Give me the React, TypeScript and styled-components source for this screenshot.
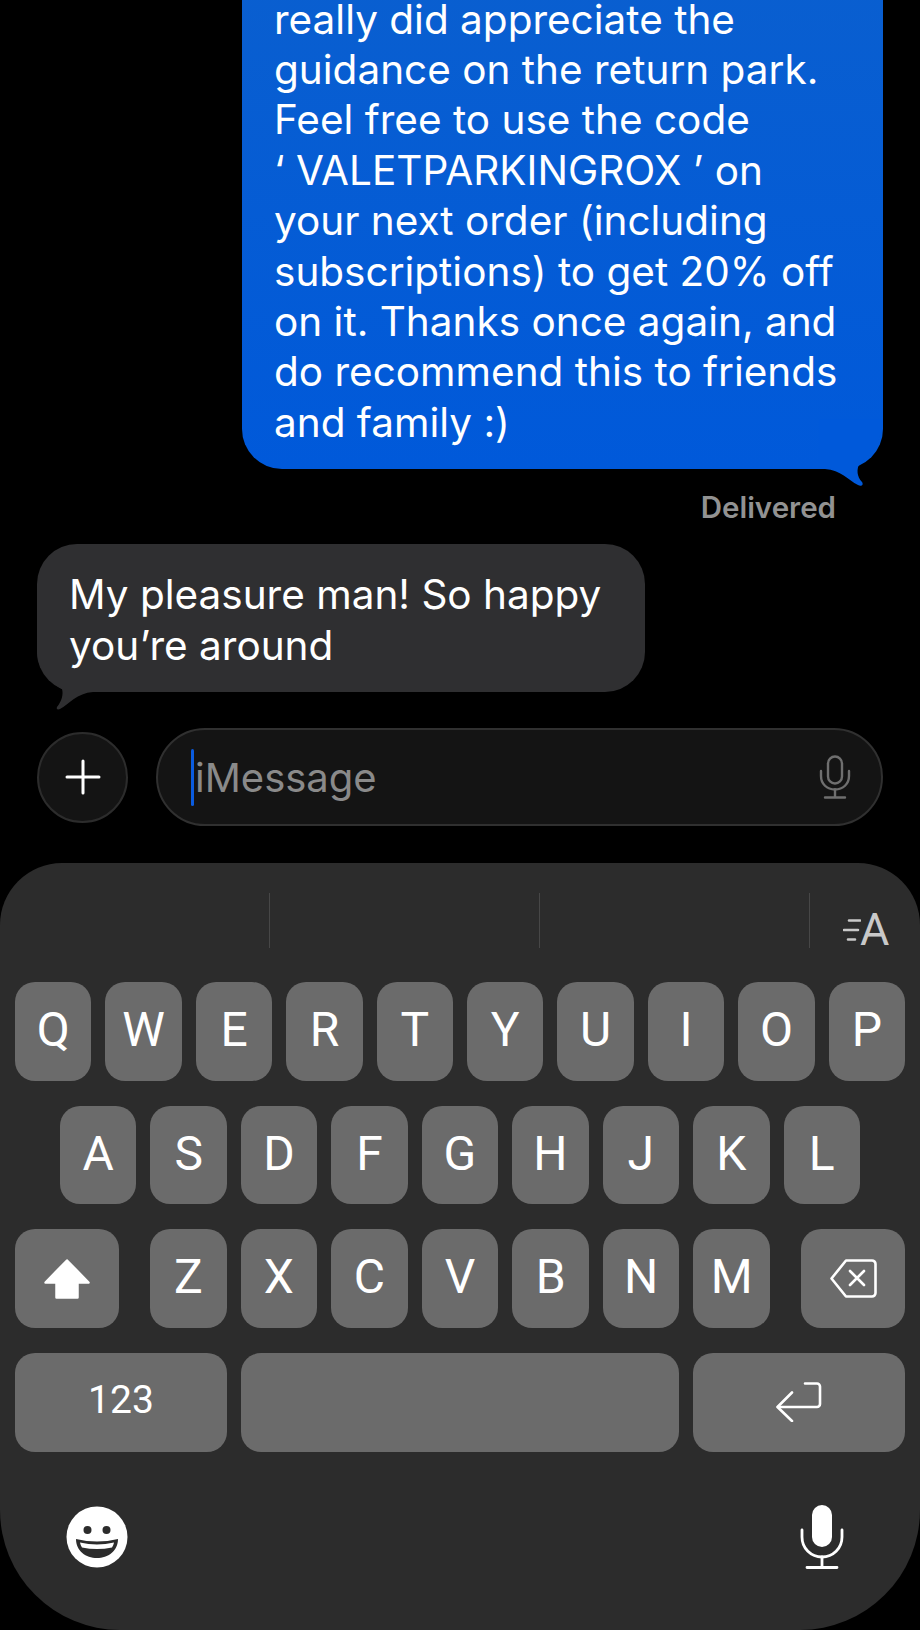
import React from 'react'
import styled, { createGlobalStyle } from 'styled-components'

const GlobalStyle = createGlobalStyle`
  html, body {
    margin: 0;
    background: #000;
  }
  * {
    box-sizing: border-box;
  }
`

const Screen = styled.div`
  width: 920px;
  height: 1630px;
  display: flex;
  flex-direction: column;
  overflow: hidden;
  background: #000;
  font-family: Inter, "Liberation Sans", sans-serif;
  color: #fff;
`

const Thread = styled.div`
  height: 863px;
  display: flex;
  flex-direction: column;
  justify-content: flex-end;
  overflow: hidden;
  padding: 0 37px 37px;
`

const Bubble = styled.div<{ $sent?: boolean }>`
  position: relative;
  flex-shrink: 0;
  ${(p) =>
    p.$sent
      ? `
    align-self: flex-end;
    width: 641px;
    padding: 40px 20px 21px 32px;
    background: linear-gradient(180deg, #0a5fcf 0%, #0059da 100%);
    border-radius: 0 0 40px 40px;
  `
      : `
    align-self: flex-start;
    width: 608px;
    padding: 26px 20px 21px 32px;
    background: #2f2f31;
    border-radius: 40px;
    margin-bottom: 36px;
  `}
`

const BubbleText = styled.div`
  position: relative;
  z-index: 1;
  white-space: pre-line;
  font-size: 40.5px;
  line-height: 50.4px;
`

const Tail = styled.svg<{ $sent?: boolean }>`
  position: absolute;
  ${(p) => (p.$sent ? 'right: 0; bottom: -20px;' : 'left: 0; bottom: -19px;')}
`

const DeliveredLabel = styled.div`
  align-self: flex-end;
  margin: 21px 47px 20px 0;
  font-size: 29.5px;
  line-height: 34px;
  font-weight: 600;
  color: #929292;
`

const Composer = styled.div`
  display: flex;
  align-items: center;
  gap: 28px;
  height: 98px;
  flex-shrink: 0;
`

const PlusButton = styled.div`
  width: 91px;
  height: 91px;
  flex-shrink: 0;
  display: flex;
  align-items: center;
  justify-content: center;
  border-radius: 50%;
  background: #141414;
  border: 2px solid #2c2c2c;
`

const InputField = styled.div`
  flex: 1;
  height: 98px;
  display: flex;
  align-items: center;
  padding: 0 30px 0 33px;
  border-radius: 49px;
  background: #141414;
  border: 2px solid #303030;
`

const Caret = styled.span`
  width: 3px;
  height: 57px;
  margin-right: 1px;
  border-radius: 2px;
  background: #0a5ce0;
`

const Placeholder = styled.span`
  flex: 1;
  font-size: 40px;
  color: #8a8a8a;
`

const Keyboard = styled.div`
  flex: 1;
  padding-top: 30px;
  background: #2c2c2c;
  border-radius: 62px 62px 120px 120px;
`

const SuggestionBar = styled.div`
  display: flex;
  height: 55px;
  margin-bottom: 34px;
`

const Suggestion = styled.div`
  width: 270px;
  border-right: 1.5px solid #474747;
`

const SpeedKey = styled.div`
  flex: 1;
  display: flex;
  align-items: flex-end;
  padding: 0 0 0 33px;
  color: #c9c9c9;
`

const SpeedGlyph = styled.span`
  font-family: Roboto, sans-serif;
  font-weight: 400;
  font-size: 45px;
  line-height: 52px;
  margin-left: -1px;
  margin-bottom: -8px;
`

const Keys = styled.div`
  display: flex;
  flex-direction: column;
  gap: 25px;
  padding: 0 15px;
`

const KeyRow = styled.div<{ $inset?: number }>`
  display: flex;
  gap: 14px;
  padding: 0 ${(p) => p.$inset ?? 0}px;
`

const SplitRow = styled.div`
  display: flex;
  justify-content: space-between;
`

const LetterGroup = styled.div`
  display: flex;
  gap: 14px;
  width: 620px;
`

const Key = styled.div<{ $width?: number; $small?: boolean; $icon?: boolean }>`
  ${(p) => (p.$width ? `width: ${p.$width}px; flex-shrink: 0;` : 'flex: 1;')}
  height: 98.7px;
  display: flex;
  align-items: center;
  justify-content: center;
  padding-bottom: ${(p) => (p.$icon ? 0 : 4)}px;
  border-radius: 20px;
  background: #6b6b6b;
  font-family: Roboto, sans-serif;
  font-weight: 380;
  font-size: ${(p) => (p.$small ? 39 : 48)}px;
  color: #fff;
`

const BottomRow = styled.div`
  display: flex;
  align-items: center;
  justify-content: space-between;
  margin-top: 53px;
  height: 65px;
  padding: 0 76px 0 66px;
`

const rows = ['QWERTYUIOP', 'ASDFGHJKL', 'ZXCVBNM']

const SpeedLines = () => (
  <svg width="18" height="24" viewBox="0 0 18 24" fill="none" stroke="currentColor" strokeWidth="2.6" strokeLinecap="round" style={{ marginBottom: 6 }}>
    <path d="M6 2.5H17M1 12H15M5 21.5H12" />
  </svg>
)

const ShiftIcon = () => (
  <svg width="46" height="40" viewBox="0 0 46 40" fill="#fff" stroke="#fff" strokeWidth="2.5" strokeLinejoin="round">
    <path d="M23 1.5 44.5 23.5H33.5V38.5H12.5V23.5H1.5Z" />
  </svg>
)

const DeleteIcon = () => (
  <svg width="47" height="39" viewBox="0 0 47 39" fill="none" stroke="#fff" strokeWidth="2.6" strokeLinecap="round" strokeLinejoin="round">
    <path d="M16 1.5H42a3.5 3.5 0 0 1 3.5 3.5V34a3.5 3.5 0 0 1-3.5 3.5H16L1.5 19.5Z" />
    <path d="M20 12 34 26M34 12 20 26" />
  </svg>
)

const ReturnIcon = () => (
  <svg width="46" height="40" viewBox="0 0 46 40" fill="none" stroke="#fff" strokeWidth="2.6" strokeLinecap="round" strokeLinejoin="round">
    <path d="M29 1.5H41a3 3 0 0 1 3 3V22a3 3 0 0 1-3 3H2" />
    <path d="M16 10.5 1.5 25 16 39" />
  </svg>
)

const EmojiIcon = () => (
  <svg width="62" height="62" viewBox="0 0 62 62">
    <circle cx="31" cy="31" r="30.5" fill="#fff" />
    <circle cx="21.5" cy="24" r="4" fill="#2c2c2c" />
    <circle cx="40.5" cy="24" r="4" fill="#2c2c2c" />
    <path d="M10 33Q31 38 52 33C52 45 42 52 31 52S10 45 10 33Z" fill="#2c2c2c" />
    <path d="M14 36.5Q31 40.5 48 36.5C47.5 38.5 47 40 46 41.5Q31 44.5 16 41.5C15 40 14.5 38.5 14 36.5Z" fill="#fff" />
  </svg>
)

const KeyboardMic = () => (
  <svg width="44" height="65" viewBox="0 0 44 65" fill="none" stroke="#fff" strokeWidth="2.8" strokeLinecap="round">
    <rect x="12" y="0" width="20" height="42" rx="10" fill="#fff" stroke="none" />
    <path d="M2 25V32C2 43.5 11 52 22 52S42 43.5 42 32V25" />
    <path d="M22 52V62M7 62.5H37" />
  </svg>
)

const FieldMic = () => (
  <svg width="32" height="44" viewBox="0 0 32 44" fill="none" stroke="#6f6f6f" strokeWidth="2.4" strokeLinecap="round">
    <rect x="9" y="1.5" width="14" height="27" rx="7" />
    <path d="M2 16V21C2 29 8 34.5 16 34.5S30 29 30 21V16" />
    <path d="M16 34.5V42M6 42.5H26" />
  </svg>
)

export default function App() {
  return (
    <Screen>
      <GlobalStyle />
      <Thread>
        <Bubble $sent>
          <BubbleText>{`really did appreciate the
guidance on the return park.
Feel free to use the code
‘ VALETPARKINGROX ’ on
your next order (including
subscriptions) to get 20% off
on it. Thanks once again, and
do recommend this to friends
and family :)`}</BubbleText>
          <Tail $sent width="64" height="70" viewBox="0 0 64 70" fill="#0059da">
            <path d="M64 0C64 22 49 36 41 44 37 50 38 58 43 63 45 66 42 68 39 66 29 61 22 51 6 50H0V0Z" />
          </Tail>
        </Bubble>
        <DeliveredLabel>Delivered</DeliveredLabel>
        <Bubble>
          <BubbleText>{`My pleasure man! So happy
you’re around`}</BubbleText>
          <Tail width="60" height="60" viewBox="0 0 60 60" fill="#2f2f31">
            <path d="M0 0C0 15 10 30 25 38 26.5 43 25 50 20 56 19 58.5 21 59 23 58 32 53 40 42 56 41H60V0Z" />
          </Tail>
        </Bubble>
        <Composer>
          <PlusButton>
            <svg width="36" height="36" viewBox="0 0 36 36" stroke="#fff" strokeWidth="3" strokeLinecap="round">
              <path d="M18 2V34M2 18H34" />
            </svg>
          </PlusButton>
          <InputField>
            <Caret />
            <Placeholder>iMessage</Placeholder>
            <FieldMic />
          </InputField>
        </Composer>
      </Thread>

      <Keyboard>
        <SuggestionBar>
          <Suggestion />
          <Suggestion />
          <Suggestion />
          <SpeedKey>
            <SpeedLines />
            <SpeedGlyph>A</SpeedGlyph>
          </SpeedKey>
        </SuggestionBar>

        <Keys>
          <KeyRow>
            {rows[0].split('').map((k) => (
              <Key key={k}>{k}</Key>
            ))}
          </KeyRow>
          <KeyRow $inset={45}>
            {rows[1].split('').map((k) => (
              <Key key={k}>{k}</Key>
            ))}
          </KeyRow>
          <SplitRow>
            <Key $width={104} $icon>
              <ShiftIcon />
            </Key>
            <LetterGroup>
              {rows[2].split('').map((k) => (
                <Key key={k}>{k}</Key>
              ))}
            </LetterGroup>
            <Key $width={104} $icon>
              <DeleteIcon />
            </Key>
          </SplitRow>
          <KeyRow>
            <Key $width={212} $small>
              123
            </Key>
            <Key />
            <Key $width={212} $icon>
              <ReturnIcon />
            </Key>
          </KeyRow>
        </Keys>

        <BottomRow>
          <EmojiIcon />
          <KeyboardMic />
        </BottomRow>
      </Keyboard>
    </Screen>
  )
}
